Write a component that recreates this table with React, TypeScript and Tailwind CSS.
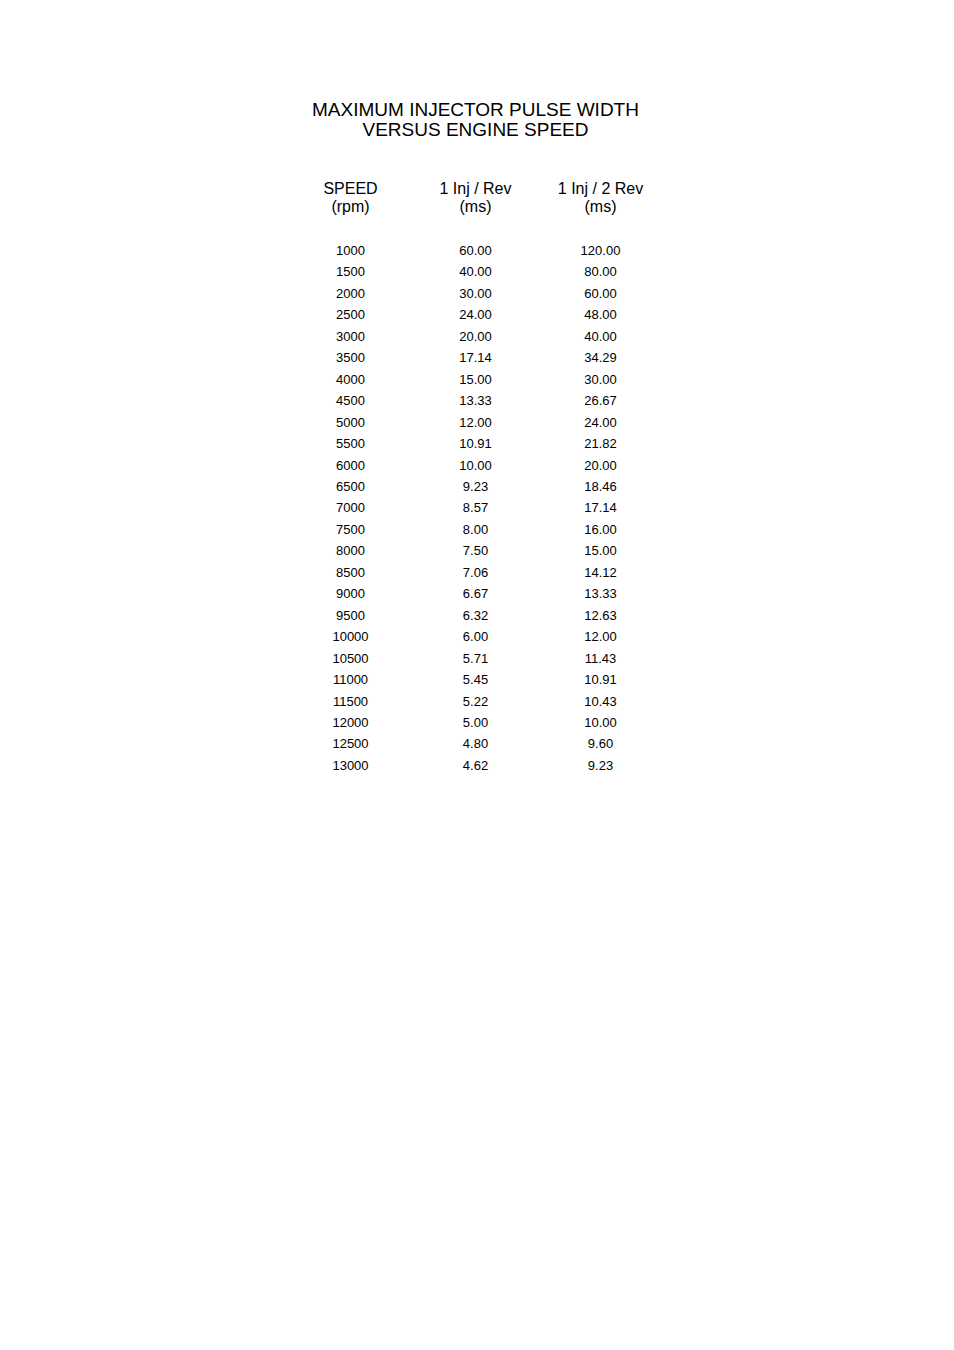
import React from "react";

const rows: [string, string, string][] = [
  ["1000", "60.00", "120.00"],
  ["1500", "40.00", "80.00"],
  ["2000", "30.00", "60.00"],
  ["2500", "24.00", "48.00"],
  ["3000", "20.00", "40.00"],
  ["3500", "17.14", "34.29"],
  ["4000", "15.00", "30.00"],
  ["4500", "13.33", "26.67"],
  ["5000", "12.00", "24.00"],
  ["5500", "10.91", "21.82"],
  ["6000", "10.00", "20.00"],
  ["6500", "9.23", "18.46"],
  ["7000", "8.57", "17.14"],
  ["7500", "8.00", "16.00"],
  ["8000", "7.50", "15.00"],
  ["8500", "7.06", "14.12"],
  ["9000", "6.67", "13.33"],
  ["9500", "6.32", "12.63"],
  ["10000", "6.00", "12.00"],
  ["10500", "5.71", "11.43"],
  ["11000", "5.45", "10.91"],
  ["11500", "5.22", "10.43"],
  ["12000", "5.00", "10.00"],
  ["12500", "4.80", "9.60"],
  ["13000", "4.62", "9.23"]
];

export default function App() {
  return (
    <div className="min-h-[1350px] w-[954px] bg-white text-black font-['Liberation_Sans',Arial,sans-serif]">
      <div className="pt-[100px] ml-[288px] w-[375px]">
        {/* Title */}
        <h1 className="text-center text-[19px] leading-[20px] font-normal">
          MAXIMUM INJECTOR PULSE WIDTH
          <br />
          VERSUS ENGINE SPEED
        </h1>

        {/* Column headings */}
        <div className="mt-[40px] grid grid-cols-3 text-center text-[16px] leading-[18px]">
          <div>
            SPEED
            <br />
            (rpm)
          </div>
          <div>
            1 Inj / Rev
            <br />
            (ms)
          </div>
          <div>
            1 Inj / 2 Rev
            <br />
            (ms)
          </div>
        </div>

        {/* Data */}
        <div className="mt-[24px] text-[13px]">
          {rows.map(([speed, one, two]) => (
            <div key={speed} className="grid grid-cols-3 text-center h-[21.46px] leading-[21.46px]">
              <div>{speed}</div>
              <div>{one}</div>
              <div>{two}</div>
            </div>
          ))}
        </div>
      </div>
    </div>
  );
}
